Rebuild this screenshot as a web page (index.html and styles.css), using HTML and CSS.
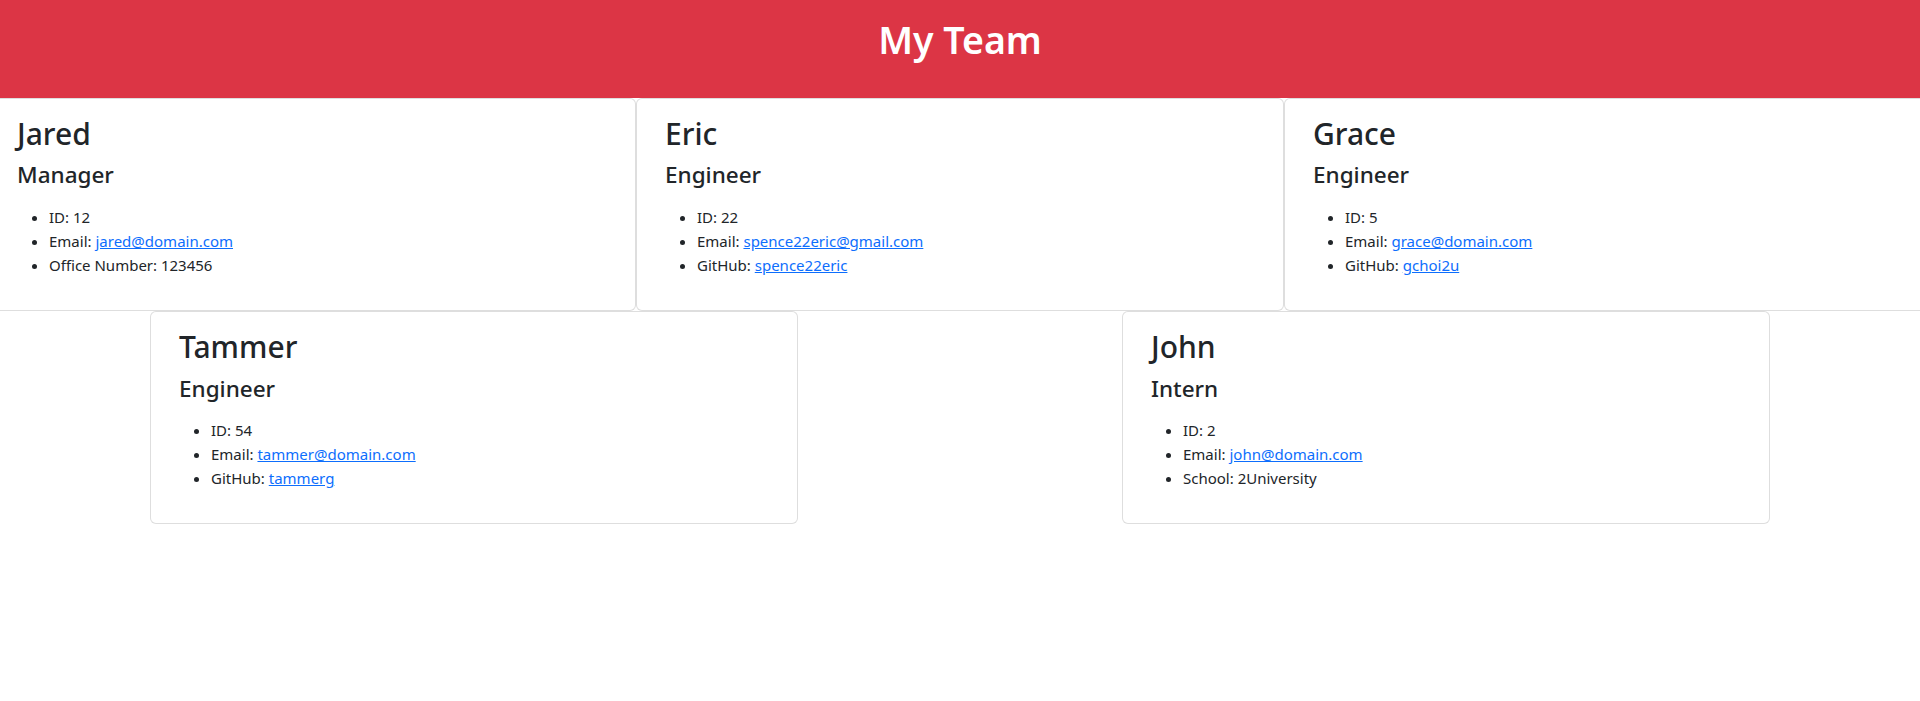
FILE: index.html
```html
<!DOCTYPE html>
<html lang="en">
<head>
<meta charset="utf-8">
<title>My Team</title>
<link rel="stylesheet" href="styles.css">
</head>
<body>
<header class="hero">
  <h1 class="hero-title">My Team</h1>
</header>
<main>
  <div class="row">
    <div class="card col">
      <div class="card-body">
        <h2 class="card-title">Jared</h2>
        <h4 class="card-role">Manager</h4>
        <ul class="info">
          <li>ID: 12</li>
          <li>Email: <a href="mailto:jared@domain.com">jared@domain.com</a></li>
          <li>Office Number: 123456</li>
        </ul>
      </div>
    </div>
    <div class="card col">
      <div class="card-body">
        <h2 class="card-title">Eric</h2>
        <h4 class="card-role">Engineer</h4>
        <ul class="info">
          <li>ID: 22</li>
          <li>Email: <a href="mailto:spence22eric@gmail.com">spence22eric@gmail.com</a></li>
          <li>GitHub: <a href="#">spence22eric</a></li>
        </ul>
      </div>
    </div>
    <div class="card col">
      <div class="card-body">
        <h2 class="card-title">Grace</h2>
        <h4 class="card-role">Engineer</h4>
        <ul class="info">
          <li>ID: 5</li>
          <li>Email: <a href="mailto:grace@domain.com">grace@domain.com</a></li>
          <li>GitHub: <a href="#">gchoi2u</a></li>
        </ul>
      </div>
    </div>
  </div>
  <div class="row row-around">
    <div class="card col">
      <div class="card-body">
        <h2 class="card-title">Tammer</h2>
        <h4 class="card-role">Engineer</h4>
        <ul class="info">
          <li>ID: 54</li>
          <li>Email: <a href="mailto:tammer@domain.com">tammer@domain.com</a></li>
          <li>GitHub: <a href="#">tammerg</a></li>
        </ul>
      </div>
    </div>
    <div class="card col">
      <div class="card-body">
        <h2 class="card-title">John</h2>
        <h4 class="card-role">Intern</h4>
        <ul class="info">
          <li>ID: 2</li>
          <li>Email: <a href="mailto:john@domain.com">john@domain.com</a></li>
          <li>School: 2University</li>
        </ul>
      </div>
    </div>
  </div>
</main>
</body>
</html>
```

FILE: styles.css
```css
* { box-sizing: border-box; }
html, body { margin: 0; padding: 0; }
body {
  font-family: "Noto Sans", "Open Sans", sans-serif;
  font-size: 15px;
  line-height: 24px;
  color: #212529;
  background: #fff;
  overflow-x: hidden;
}
.hero {
  background: #dc3545;
  height: 98px;
  padding-top: 16px;
  text-align: center;
}
.hero-title {
  margin: 0;
  color: #fff;
  font-size: 37.5px;
  line-height: 48px;
  font-weight: 600;
}
.row {
  display: flex;
  margin: 0 -12px;
}
.row-around { justify-content: space-around; }
.col {
  flex: 0 0 auto;
  width: 648px;
  padding: 0 12px;
}
.card {
  border: 1px solid rgba(0, 0, 0, 0.13);
  border-radius: 6px;
  background: #fff;
}
.card-body { padding: 16px; }
.card-title {
  margin: 0 0 8px;
  font-size: 30px;
  line-height: 38.4px;
  font-weight: 500;
}
.card-role {
  margin: 0 0 8px;
  font-size: 22.5px;
  line-height: 28.8px;
  font-weight: 500;
}
.info {
  margin: 15px 0 17px;
  padding-left: 32px;
}
.info a { color: #0d6efd; }
```
